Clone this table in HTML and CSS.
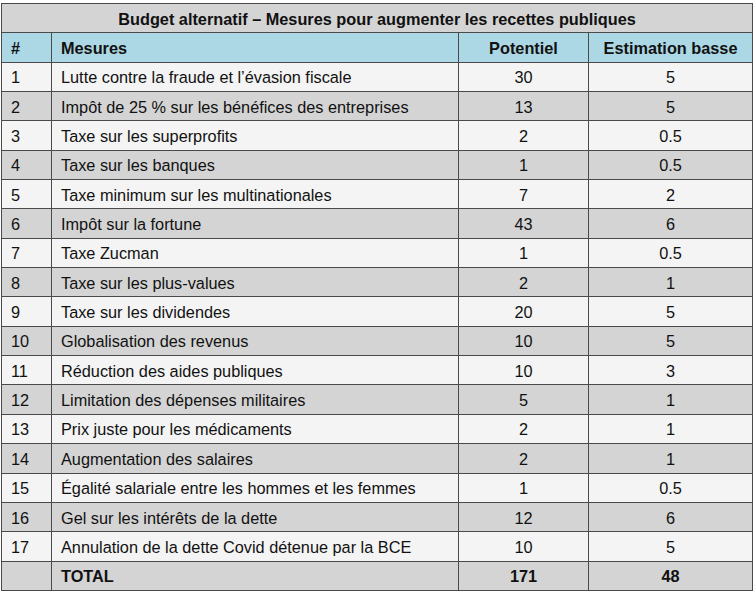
FILE: index.html
```html
<!DOCTYPE html>
<html lang="fr">
<head>
<meta charset="utf-8">
<title>Budget alternatif</title>
<link rel="stylesheet" href="styles.css">
</head>
<body>
<table class="budget">
  <colgroup>
    <col class="c-num">
    <col class="c-mes">
    <col class="c-pot">
    <col class="c-est">
  </colgroup>
  <thead>
    <tr class="title"><th colspan="4">Budget alternatif – Mesures pour augmenter les recettes publiques</th></tr>
    <tr class="head"><th class="l">#</th><th class="l">Mesures</th><th>Potentiel</th><th>Estimation basse</th></tr>
  </thead>
  <tbody>
    <tr><td>1</td><td>Lutte contre la fraude et l’évasion fiscale</td><td class="n">30</td><td class="n">5</td></tr>
    <tr><td>2</td><td>Impôt de 25 % sur les bénéfices des entreprises</td><td class="n">13</td><td class="n">5</td></tr>
    <tr><td>3</td><td>Taxe sur les superprofits</td><td class="n">2</td><td class="n">0.5</td></tr>
    <tr><td>4</td><td>Taxe sur les banques</td><td class="n">1</td><td class="n">0.5</td></tr>
    <tr><td>5</td><td>Taxe minimum sur les multinationales</td><td class="n">7</td><td class="n">2</td></tr>
    <tr><td>6</td><td>Impôt sur la fortune</td><td class="n">43</td><td class="n">6</td></tr>
    <tr><td>7</td><td>Taxe Zucman</td><td class="n">1</td><td class="n">0.5</td></tr>
    <tr><td>8</td><td>Taxe sur les plus-values</td><td class="n">2</td><td class="n">1</td></tr>
    <tr><td>9</td><td>Taxe sur les dividendes</td><td class="n">20</td><td class="n">5</td></tr>
    <tr><td>10</td><td>Globalisation des revenus</td><td class="n">10</td><td class="n">5</td></tr>
    <tr><td>11</td><td>Réduction des aides publiques</td><td class="n">10</td><td class="n">3</td></tr>
    <tr><td>12</td><td>Limitation des dépenses militaires</td><td class="n">5</td><td class="n">1</td></tr>
    <tr><td>13</td><td>Prix juste pour les médicaments</td><td class="n">2</td><td class="n">1</td></tr>
    <tr><td>14</td><td>Augmentation des salaires</td><td class="n">2</td><td class="n">1</td></tr>
    <tr><td>15</td><td>Égalité salariale entre les hommes et les femmes</td><td class="n">1</td><td class="n">0.5</td></tr>
    <tr><td>16</td><td>Gel sur les intérêts de la dette</td><td class="n">12</td><td class="n">6</td></tr>
    <tr><td>17</td><td>Annulation de la dette Covid détenue par la BCE</td><td class="n">10</td><td class="n">5</td></tr>
    <tr class="total"><td></td><td>TOTAL</td><td class="n">171</td><td class="n">48</td></tr>
  </tbody>
</table>
</body>
</html>
```
FILE: styles.css
```css
html, body {
  margin: 0;
  padding: 0;
  background: #ffffff;
}
body {
  padding: 3px 0 0 1px;
  font-family: "Liberation Sans", Arial, sans-serif;
  font-size: 16.3px;
  color: #111;
}
.budget {
  border-collapse: collapse;
  table-layout: fixed;
  width: 751px;
}
.budget tr {
  height: 29.35px;
}
.c-num { width: 50px; }
.c-mes { width: 407px; }
.c-pot { width: 130px; }
.c-est { width: 164px; }
.budget th, .budget td {
  border: 1px solid #4a4a4a;
  padding: 2px 9px 0;
  text-align: left;
  white-space: nowrap;
  vertical-align: middle;
}
.budget th {
  font-weight: bold;
  text-align: center;
}
.budget th.l { text-align: left; }
.title th { background: #d4d4d4; }
.head th { background: #acd8e5; }
.budget tbody tr:nth-child(odd) td { background: #f4f4f4; }
.budget tbody tr:nth-child(even) td { background: #d4d4d4; }
.budget td.n { text-align: center; }
.budget tr.total td {
  font-weight: bold;
  background: #d4d4d4;
}
```
